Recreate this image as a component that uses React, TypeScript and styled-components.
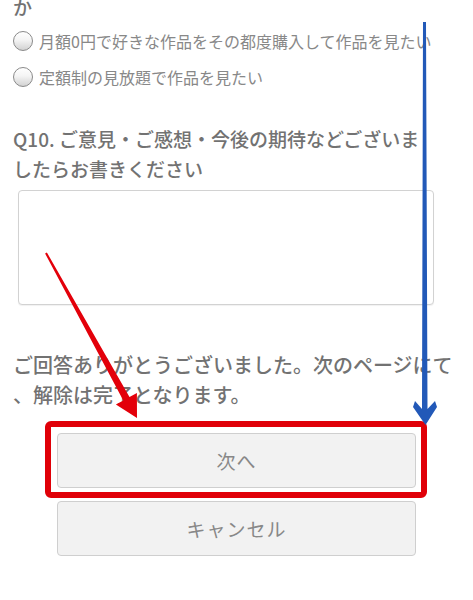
import styled, { createGlobalStyle } from "styled-components";

const GlobalStyle = createGlobalStyle`
  html, body {
    margin: 0;
    padding: 0;
    background: #fff;
  }
  body {
    font-family: "Noto Sans CJK JP", "Noto Sans", sans-serif;
  }
`;

const Page = styled.div`
  position: relative;
  width: 473px;
  height: 600px;
  overflow: hidden;
  padding: 0 13px;
  box-sizing: border-box;
`;

const QuestionTail = styled.div`
  margin-top: -8px;
  font-size: 19px;
  font-weight: 500;
  line-height: 30px;
  color: #727272;
`;

const RadioList = styled.div`
  display: flex;
  flex-direction: column;
  margin-top: 1px;
`;

const RadioRow = styled.label`
  display: flex;
  align-items: center;
  height: 36px;
  font-size: 16px;
  color: #888;
  white-space: nowrap;
`;

const RadioCircle = styled.span`
  width: 18px;
  height: 18px;
  margin-right: 6px;
  border-radius: 50%;
  border: 1px solid #8a8a8a;
  background: linear-gradient(#ffffff 0%, #f4f4f4 45%, #d2d2d2 100%);
  flex-shrink: 0;
`;

const Heading = styled.h2`
  margin: 29px 0 0 0;
  font-size: 19px;
  font-weight: 500;
  line-height: 30px;
  color: #727272;
  white-space: nowrap;
`;

const Comment = styled.textarea`
  display: block;
  width: 416px;
  height: 115px;
  margin: 6px 0 0 5px;
  box-sizing: border-box;
  border: 1px solid #d2d2d2;
  border-radius: 4px;
  box-shadow: 0 1px 1px rgba(0, 0, 0, 0.06);
  resize: none;
  outline: none;
`;

const Thanks = styled.p`
  margin: 45px 0 0 0;
  font-size: 20px;
  font-weight: 500;
  line-height: 30px;
  color: #727272;
  white-space: nowrap;
`;

const Buttons = styled.div`
  display: flex;
  flex-direction: column;
  align-items: center;
  gap: 13px;
  margin-top: 23px;
`;

const Button = styled.button`
  width: 359px;
  height: 55px;
  box-sizing: border-box;
  border: 1px solid #cfcfcf;
  border-radius: 4px;
  background: #f2f2f2;
  color: #888;
  font-family: "Noto Sans CJK JP", "Noto Sans", sans-serif;
  font-size: 19px;
  letter-spacing: 1px;
`;

const Annotations = styled.svg`
  position: absolute;
  top: 0;
  left: 0;
  pointer-events: none;
`;

export default function App() {
  return (
    <>
      <GlobalStyle />
      <Page>
        <QuestionTail>か</QuestionTail>
        <RadioList>
          <RadioRow>
            <RadioCircle />
            月額0円で好きな作品をその都度購入して作品を見たい
          </RadioRow>
          <RadioRow>
            <RadioCircle />
            定額制の見放題で作品を見たい
          </RadioRow>
        </RadioList>
        <Heading>
          Q10. ご意見・ご感想・今後の期待などございま
          <br />
          したらお書きください
        </Heading>
        <Comment />
        <Thanks>
          ご回答ありがとうございました。次のページにて
          <br />
          、解除は完了となります。
        </Thanks>
        <Buttons>
          <Button>次へ</Button>
          <Button>キャンセル</Button>
        </Buttons>

        <Annotations width="473" height="600" viewBox="0 0 473 600">
          <rect
            x="48"
            y="424"
            width="376"
            height="71"
            rx="3"
            fill="none"
            stroke="#e00008"
            strokeWidth="6"
          />
          <polygon
            points="45.1,253.5 46.9,252.5 129.5,397 136.9,392.9 137,418 115.9,404.5 123.3,400.4"
            fill="#e3000a"
          />
          <polygon
            points="423,22 426,22 427.5,409 435,401 437,407 425.5,425 413,407 415,401 422,409"
            fill="#2259b8"
          />
        </Annotations>
      </Page>
    </>
  );
}
